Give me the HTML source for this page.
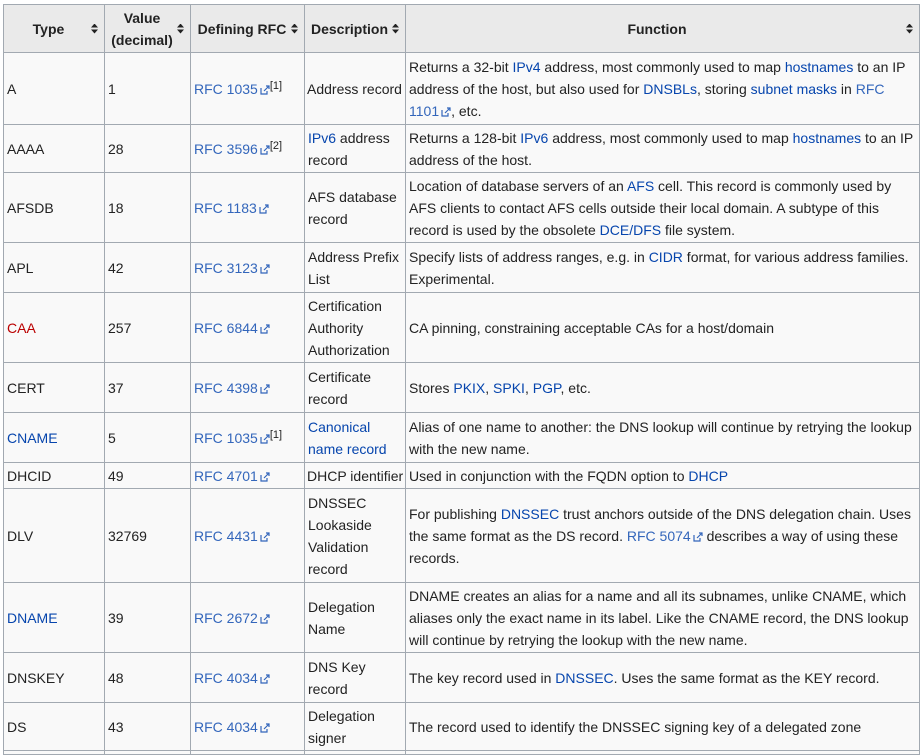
<!DOCTYPE html>
<html><head><meta charset="utf-8"><style>
html,body{margin:0;background:#fff;font-family:"Liberation Sans",Arial,sans-serif;font-size:14px;color:#222;height:754px;overflow:hidden;}
table{position:absolute;left:3px;top:4px;border-collapse:collapse;table-layout:fixed;width:916px;background:#f9f9f9;}
td,th{border:1px solid #a2a9b1;padding:0 3px;line-height:22px;vertical-align:middle;overflow:hidden;}
th{background:#eaeaea;font-weight:bold;text-align:center;position:relative;padding-right:14px;}
th:after{content:"";position:absolute;right:6px;top:50%;margin-top:-5px;width:7px;height:10px;background:#222;clip-path:polygon(50% 0,100% 40%,0 40%,0 60%,100% 60%,50% 100%,0 60%,0 40%);}
a{color:#0645ad;text-decoration:none}
.e{color:#3366bb}
.r{color:#ba0000}
sup{font-size:11px;line-height:1;vertical-align:5px}
.x{display:inline-block;width:10px;height:10px;margin-left:2px;vertical-align:-1px}
tr.last td{line-height:0;height:3px;padding:0}
</style></head><body>
<table>
<colgroup><col style="width:101px"><col style="width:86px"><col style="width:114px"><col style="width:101px"><col style="width:514px"></colgroup>
<tr style="height:48px"><th>Type</th><th>Value<br>(decimal)</th><th>Defining RFC</th><th>Description</th><th>Function</th></tr>
<tr style="height:72px"><td>A</td><td>1</td><td><a class="e">RFC 1035</a><svg class="x" viewBox="0 0 10 10"><path d="M1 3v6h6V6M4 6l5-5M6 1h3v3" fill="none" stroke="#3366bb" stroke-width="1.2"/></svg><sup>[1]</sup></td><td style="white-space:nowrap;padding:0 2px">Address record</td><td>Returns a 32-bit <a>IPv4</a> address, most commonly used to map <a>hostnames</a> to an IP address of the host, but also used for <a>DNSBLs</a>, storing <a>subnet masks</a> in <a class="e">RFC 1101</a><svg class="x" viewBox="0 0 10 10"><path d="M1 3v6h6V6M4 6l5-5M6 1h3v3" fill="none" stroke="#3366bb" stroke-width="1.2"/></svg>, etc.</td></tr>
<tr style="height:48px"><td>AAAA</td><td>28</td><td><a class="e">RFC 3596</a><svg class="x" viewBox="0 0 10 10"><path d="M1 3v6h6V6M4 6l5-5M6 1h3v3" fill="none" stroke="#3366bb" stroke-width="1.2"/></svg><sup>[2]</sup></td><td><a>IPv6</a> address record</td><td>Returns a 128-bit <a>IPv6</a> address, most commonly used to map <a>hostnames</a> to an IP address of the host.</td></tr>
<tr style="height:70px"><td>AFSDB</td><td>18</td><td><a class="e">RFC 1183</a><svg class="x" viewBox="0 0 10 10"><path d="M1 3v6h6V6M4 6l5-5M6 1h3v3" fill="none" stroke="#3366bb" stroke-width="1.2"/></svg></td><td>AFS database record</td><td>Location of database servers of an <a>AFS</a> cell. This record is commonly used by AFS clients to contact AFS cells outside their local domain. A subtype of this record is used by the obsolete <a>DCE/DFS</a> file system.</td></tr>
<tr style="height:50px"><td>APL</td><td>42</td><td><a class="e">RFC 3123</a><svg class="x" viewBox="0 0 10 10"><path d="M1 3v6h6V6M4 6l5-5M6 1h3v3" fill="none" stroke="#3366bb" stroke-width="1.2"/></svg></td><td>Address Prefix List</td><td>Specify lists of address ranges, e.g. in <a>CIDR</a> format, for various address families. Experimental.</td></tr>
<tr style="height:70px"><td><a class="r">CAA</a></td><td>257</td><td><a class="e">RFC 6844</a><svg class="x" viewBox="0 0 10 10"><path d="M1 3v6h6V6M4 6l5-5M6 1h3v3" fill="none" stroke="#3366bb" stroke-width="1.2"/></svg></td><td>Certification Authority Authorization</td><td>CA pinning, constraining acceptable CAs for a host/domain</td></tr>
<tr style="height:50px"><td>CERT</td><td>37</td><td><a class="e">RFC 4398</a><svg class="x" viewBox="0 0 10 10"><path d="M1 3v6h6V6M4 6l5-5M6 1h3v3" fill="none" stroke="#3366bb" stroke-width="1.2"/></svg></td><td>Certificate record</td><td>Stores <a>PKIX</a>, <a>SPKI</a>, <a>PGP</a>, etc.</td></tr>
<tr style="height:50px"><td><a>CNAME</a></td><td>5</td><td><a class="e">RFC 1035</a><svg class="x" viewBox="0 0 10 10"><path d="M1 3v6h6V6M4 6l5-5M6 1h3v3" fill="none" stroke="#3366bb" stroke-width="1.2"/></svg><sup>[1]</sup></td><td><a>Canonical name record</a></td><td>Alias of one name to another: the DNS lookup will continue by retrying the lookup with the new name.</td></tr>
<tr style="height:26px"><td>DHCID</td><td>49</td><td><a class="e">RFC 4701</a><svg class="x" viewBox="0 0 10 10"><path d="M1 3v6h6V6M4 6l5-5M6 1h3v3" fill="none" stroke="#3366bb" stroke-width="1.2"/></svg></td><td style="white-space:nowrap;padding:0 2px">DHCP identifier</td><td>Used in conjunction with the FQDN option to <a>DHCP</a></td></tr>
<tr style="height:94px"><td>DLV</td><td>32769</td><td><a class="e">RFC 4431</a><svg class="x" viewBox="0 0 10 10"><path d="M1 3v6h6V6M4 6l5-5M6 1h3v3" fill="none" stroke="#3366bb" stroke-width="1.2"/></svg></td><td>DNSSEC Lookaside Validation record</td><td>For publishing <a>DNSSEC</a> trust anchors outside of the DNS delegation chain. Uses the same format as the DS record. <a class="e">RFC 5074</a><svg class="x" viewBox="0 0 10 10"><path d="M1 3v6h6V6M4 6l5-5M6 1h3v3" fill="none" stroke="#3366bb" stroke-width="1.2"/></svg> describes a way of using these records.</td></tr>
<tr style="height:70px"><td><a>DNAME</a></td><td>39</td><td><a class="e">RFC 2672</a><svg class="x" viewBox="0 0 10 10"><path d="M1 3v6h6V6M4 6l5-5M6 1h3v3" fill="none" stroke="#3366bb" stroke-width="1.2"/></svg></td><td>Delegation Name</td><td>DNAME creates an alias for a name and all its subnames, unlike CNAME, which aliases only the exact name in its label. Like the CNAME record, the DNS lookup will continue by retrying the lookup with the new name.</td></tr>
<tr style="height:50px"><td>DNSKEY</td><td>48</td><td><a class="e">RFC 4034</a><svg class="x" viewBox="0 0 10 10"><path d="M1 3v6h6V6M4 6l5-5M6 1h3v3" fill="none" stroke="#3366bb" stroke-width="1.2"/></svg></td><td>DNS Key record</td><td>The key record used in <a>DNSSEC</a>. Uses the same format as the KEY record.</td></tr>
<tr style="height:48px"><td>DS</td><td>43</td><td><a class="e">RFC 4034</a><svg class="x" viewBox="0 0 10 10"><path d="M1 3v6h6V6M4 6l5-5M6 1h3v3" fill="none" stroke="#3366bb" stroke-width="1.2"/></svg></td><td>Delegation signer</td><td>The record used to identify the DNSSEC signing key of a delegated zone</td></tr>
<tr class="last"><td></td><td></td><td></td><td></td><td></td></tr>
</table>
</body></html>
